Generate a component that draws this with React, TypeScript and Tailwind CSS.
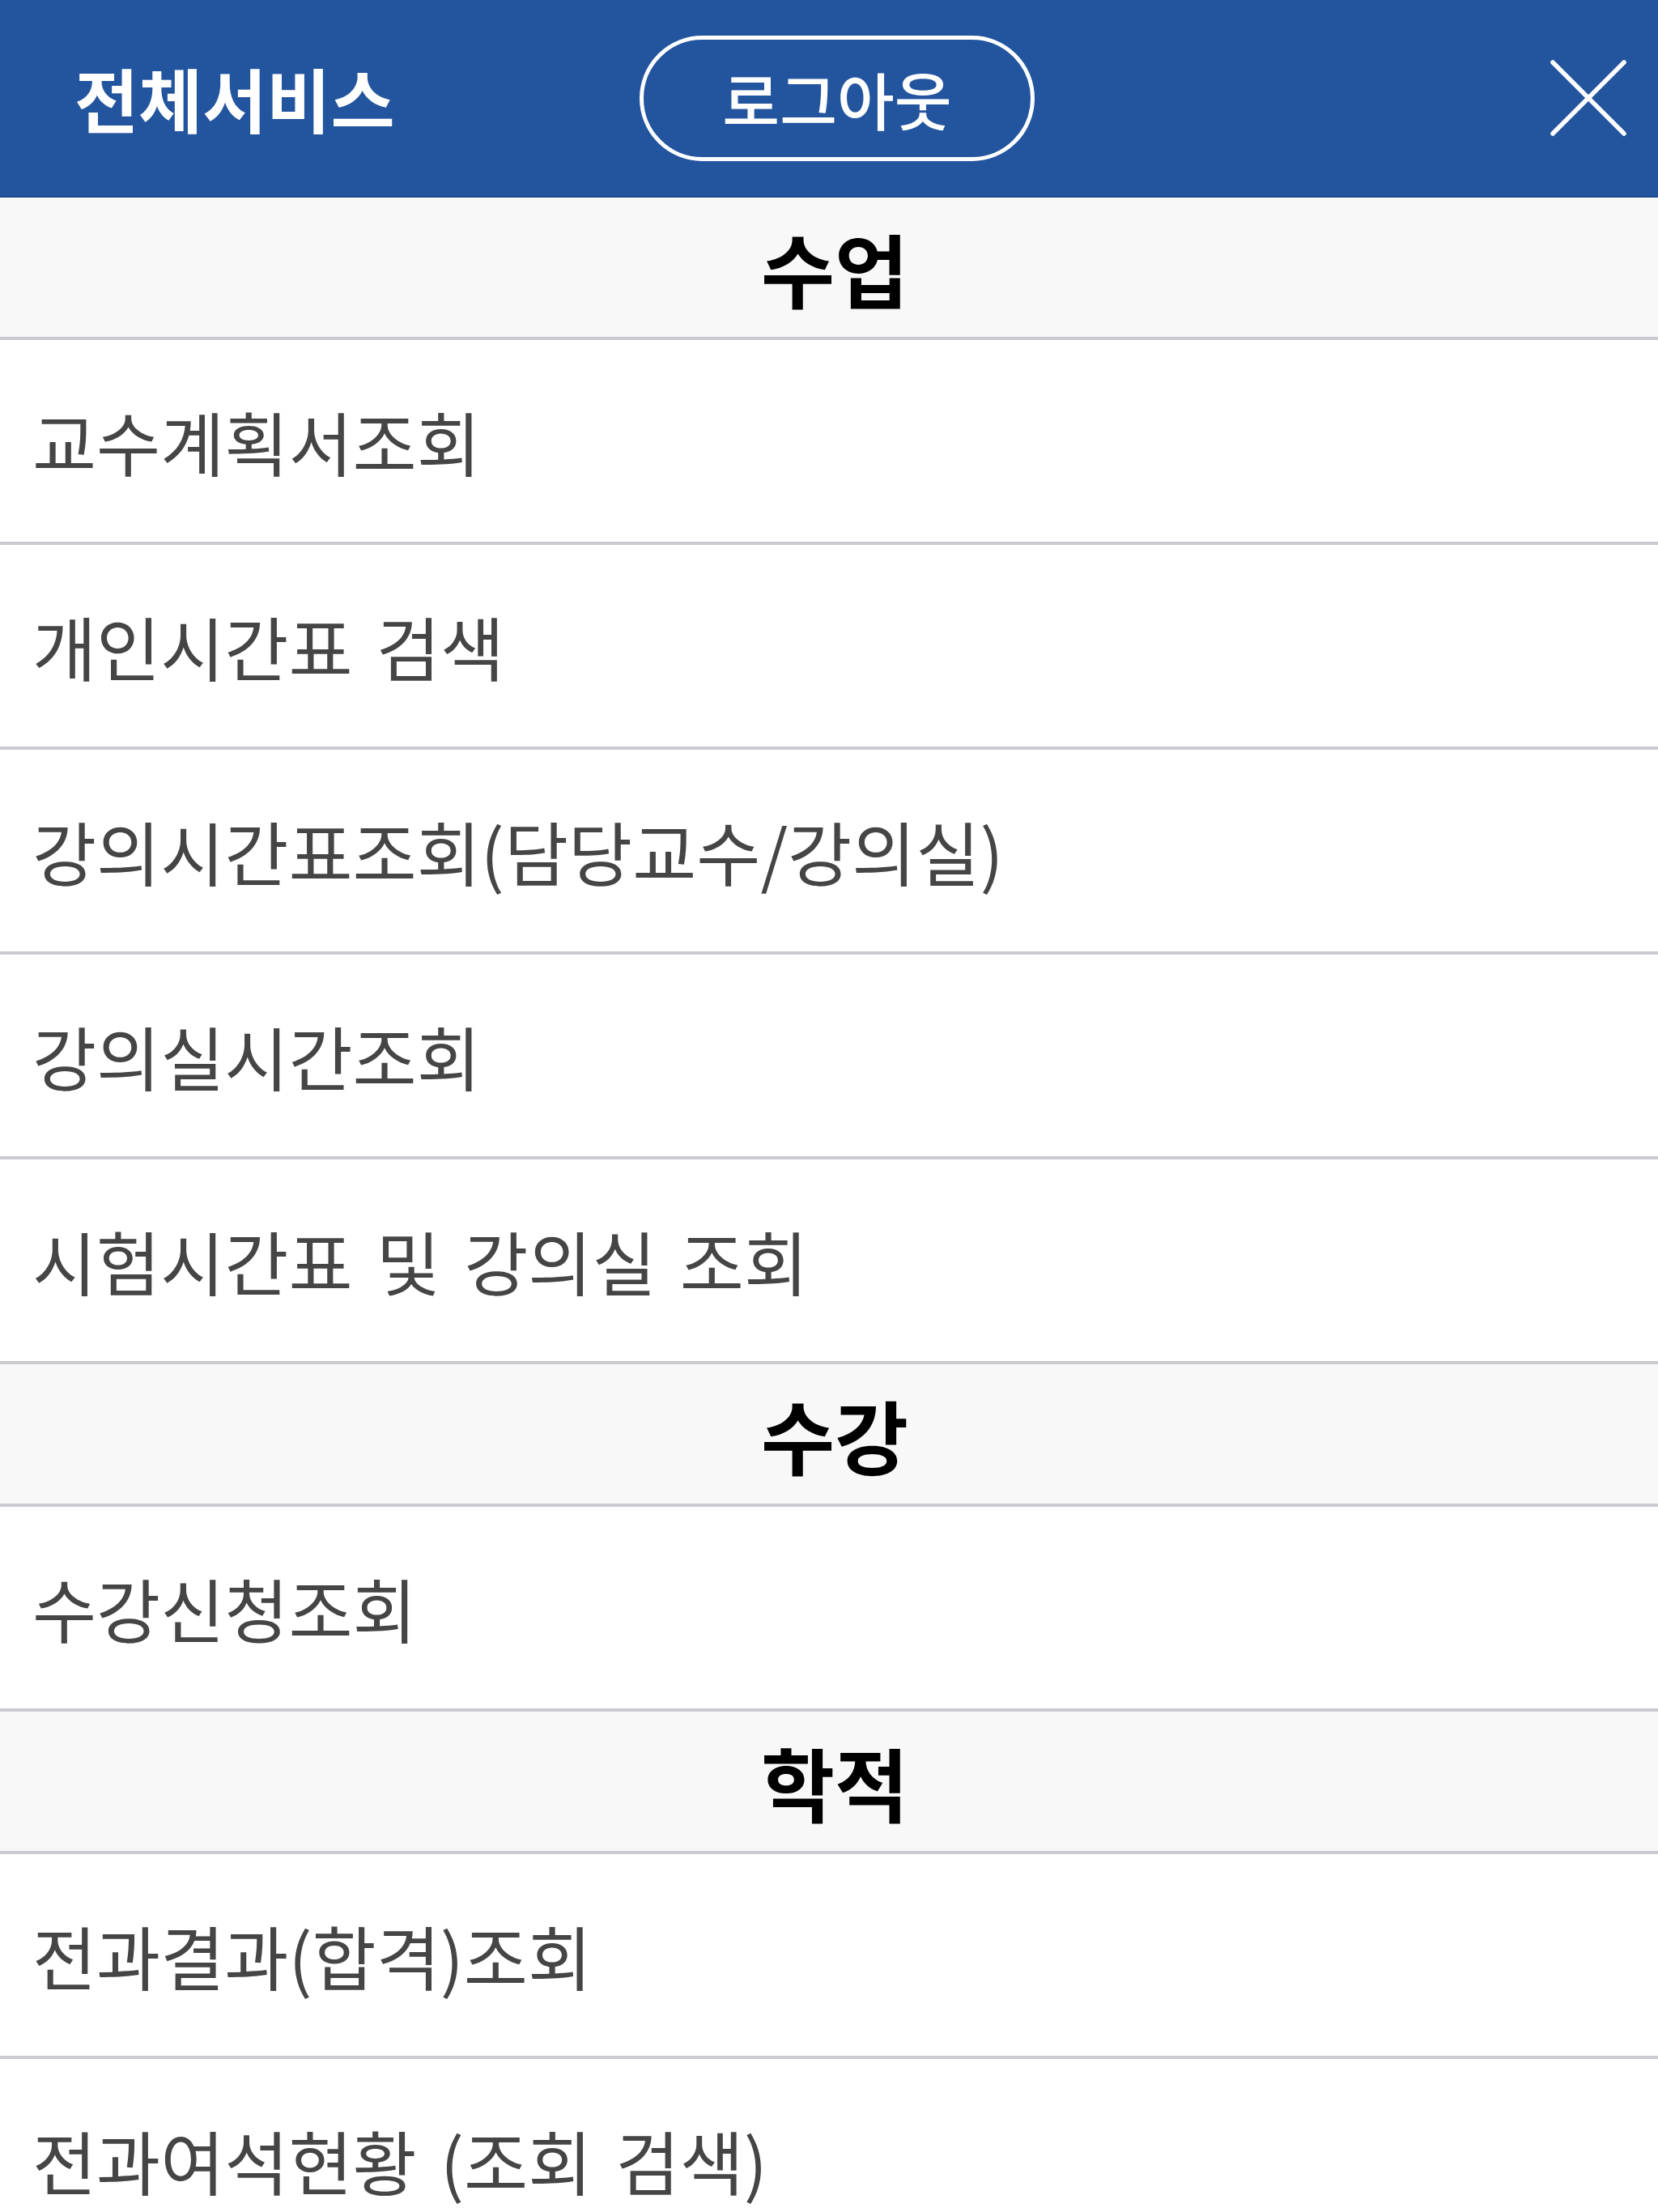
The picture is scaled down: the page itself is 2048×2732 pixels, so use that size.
import React from "react";

type Row = { kind: "section"; label: string } | { kind: "item"; label: string };

const rows: Row[] = [
  { kind: "section", label: "수업" },
  { kind: "item", label: "교수계획서조회" },
  { kind: "item", label: "개인시간표 검색" },
  { kind: "item", label: "강의시간표조회(담당교수/강의실)" },
  { kind: "item", label: "강의실시간조회" },
  { kind: "item", label: "시험시간표 및 강의실 조회" },
  { kind: "section", label: "수강" },
  { kind: "item", label: "수강신청조회" },
  { kind: "section", label: "학적" },
  { kind: "item", label: "전과결과(합격)조회" },
  { kind: "item", label: "전과여석현황 (조회 검색)" },
];

function CloseIcon() {
  return (
    <svg width="96" height="96" viewBox="0 0 96 96" fill="none" stroke="white" strokeWidth="5.5" strokeLinecap="round">
      <line x1="4" y1="4" x2="92" y2="92" />
      <line x1="92" y1="4" x2="4" y2="92" />
    </svg>
  );
}

function Header() {
  return (
    <header className="h-[244px] bg-[#23559f] flex items-center pl-[92px] pr-[38px] border-b-2 border-[#1d4a8c]">
      <h1 className="text-[86px] font-bold text-white leading-none w-[698px]">
        전체서비스
      </h1>
      <button className="h-[155px] w-[488px] rounded-full border-[5px] border-white flex items-center justify-center text-white text-[77px] font-medium leading-none">
        로그아웃
      </button>
      <div className="flex-1" />
      <button className="w-[96px] h-[96px] flex items-center justify-center">
        <CloseIcon />
      </button>
    </header>
  );
}

export default function App() {
  return (
    <div
      className="w-[2048px] h-[2732px] overflow-hidden bg-white"
      style={{ fontFamily: '"Noto Sans CJK KR", "Noto Sans", sans-serif' }}
    >
      <Header />
      <ul>
        {rows.map((r, i) =>
          r.kind === "section" ? (
            <li
              key={i}
              className="h-[176px] bg-[#f8f8f9] border-b-4 border-[#cacbd0] flex items-center justify-center pl-[14px] text-[99px] font-bold text-black leading-none"
            >
              {r.label}
            </li>
          ) : (
            <li
              key={i}
              className="h-[253px] shrink-0 border-b-4 border-[#cacbd0] flex items-center pl-[40px] text-[86px] text-[#454545] leading-none [word-spacing:10px]"
            >
              {r.label}
            </li>
          )
        )}
      </ul>
    </div>
  );
}
